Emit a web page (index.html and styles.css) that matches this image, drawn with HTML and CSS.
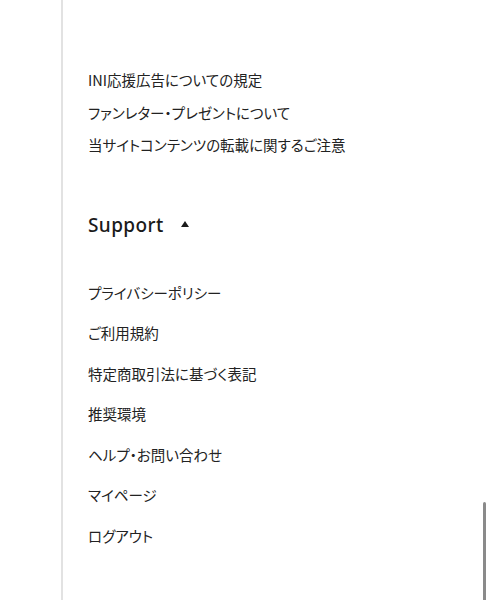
FILE: index.html
```html
<!DOCTYPE html>
<html lang="ja">
<head>
    <meta charset="UTF-8">
    <meta name="viewport" content="width=device-width, initial-scale=1.0">
    <title>Support</title>
    <link rel="stylesheet" href="styles.css">
</head>
<body>
    <div class="panel">
        <ul class="links">
            <li><a href="#">INI応援広告についての規定</a></li>
            <li><a href="#">ファンレター・プレゼントについて</a></li>
            <li><a href="#">当サイトコンテンツの転載に関するご注意</a></li>
        </ul>

        <h2 class="section-title">Support <span class="caret"></span></h2>

        <ul class="links support">
            <li><a href="#">プライバシーポリシー</a></li>
            <li><a href="#">ご利用規約</a></li>
            <li><a href="#">特定商取引法に基づく表記</a></li>
            <li><a href="#">推奨環境</a></li>
            <li><a href="#">ヘルプ・お問い合わせ</a></li>
            <li><a href="#">マイページ</a></li>
            <li><a href="#">ログアウト</a></li>
        </ul>
    </div>
    <div class="scrollbar"></div>
</body>
</html>
```

FILE: styles.css
```css
* {
    margin: 0;
    padding: 0;
    box-sizing: border-box;
}

body {
    width: 100%;
    height: 600px;
    overflow: hidden;
    background: #fff;
    font-family: "Noto Sans CJK JP", "Noto Sans", sans-serif;
    color: #222;
}

.panel {
    margin-left: 61px;
    height: 600px;
    border-left: 2px solid #e2e2e2;
    padding: 64px 0 0 25px;
}

.links {
    list-style: none;
}

.links li {
    font-size: 14.5px;
    line-height: 32.5px;
    font-feature-settings: "palt";
}

.links a {
    color: #222;
    text-decoration: none;
}

.section-title {
    display: flex;
    align-items: center;
    gap: 17px;
    height: 30px;
    margin-top: 48px;
    font-family: "Noto Sans", sans-serif;
    font-size: 19px;
    font-weight: 500;
    letter-spacing: 0.4px;
    color: #1a1a1a;
}

.caret {
    width: 0;
    height: 0;
    border-left: 4.5px solid transparent;
    border-right: 4.5px solid transparent;
    border-bottom: 6px solid #1a1a1a;
    margin-top: -2px;
}

.support {
    margin-top: 33px;
}

.support li {
    line-height: 40.5px;
}

/* overlay scrollbar thumb */
.scrollbar {
    position: absolute;
    left: 483px;
    top: 502px;
    width: 3px;
    height: 98px;
    border-radius: 2px 2px 0 0;
    background: #8a8a8a;
}
```
